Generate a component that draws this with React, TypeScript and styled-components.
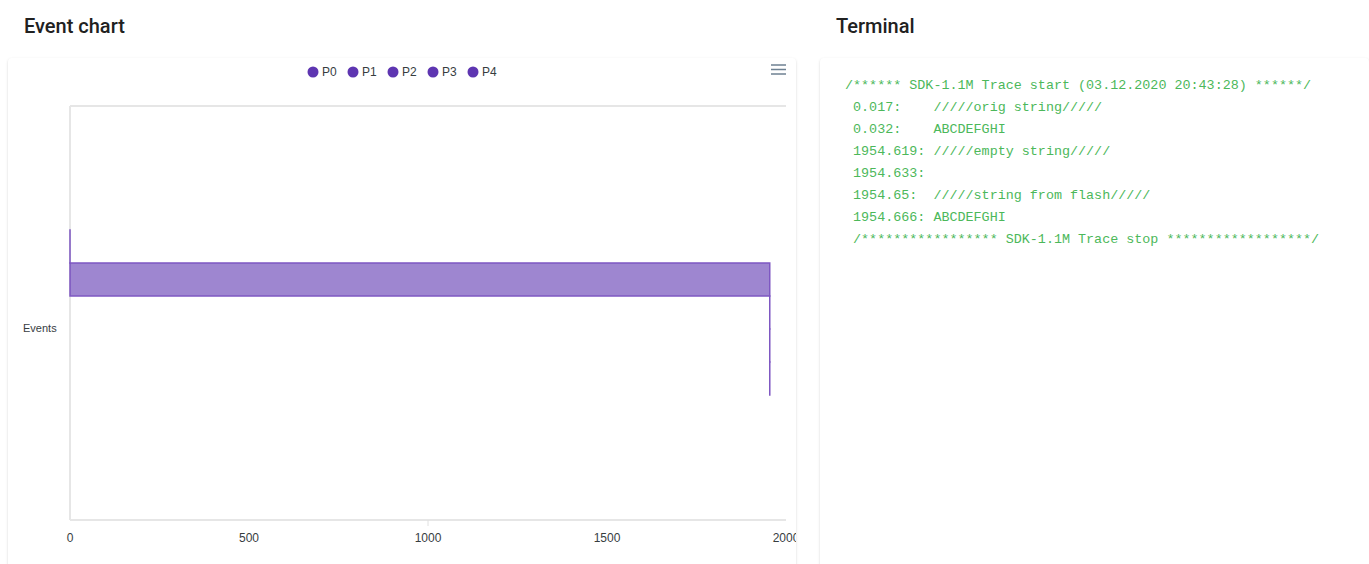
import React from "react";
import styled, { createGlobalStyle } from "styled-components";

const Global = createGlobalStyle`
  html, body { margin: 0; padding: 0; background: #fff; overflow: hidden; }
  body { font-family: Roboto, "Noto Sans", sans-serif; }
`;

const Page = styled.div`
  display: grid;
  grid-template-columns: 788px 1fr;
  column-gap: 24px;
  padding: 0 0 0 8px;
  height: 564px;
  overflow: hidden;
`;

const Column = styled.section`
  display: flex;
  flex-direction: column;
  min-width: 0;
`;

const Title = styled.h2`
  margin: 0;
  padding: 13px 16px 0;
  height: 45px;
  box-sizing: border-box;
  font-family: Roboto, sans-serif;
  font-weight: 500;
  font-size: 20px;
  line-height: 26px;
  color: #212121;
`;

const Card = styled.div`
  background: #fff;
  border-radius: 4px;
  box-shadow: 0 1px 3px rgba(0, 0, 0, 0.12), 0 1px 2px rgba(0, 0, 0, 0.06);
  height: 530px;
  margin-top: 13px;
  overflow: hidden;
`;

const TerminalBody = styled.pre`
  margin: 0;
  padding: 17px 25px;
  font-family: "Liberation Mono", "Courier New", monospace;
  font-size: 13.4px;
  line-height: 22px;
  color: #4cb85a;
  white-space: pre;
`;

const ChartSvg = styled.svg`
  display: block;
  font-family: "Liberation Sans", Arial, sans-serif;
`;

const lines = [
  "/****** SDK-1.1M Trace start (03.12.2020 20:43:28) ******/",
  " 0.017:    /////orig string/////",
  " 0.032:    ABCDEFGHI",
  " 1954.619: /////empty string/////",
  " 1954.633:",
  " 1954.65:  /////string from flash/////",
  " 1954.666: ABCDEFGHI",
  " /***************** SDK-1.1M Trace stop ******************/",
];

const PLOT_L = 62;
const PLOT_R = 778;
const PLOT_T = 48;
const PLOT_B = 462;
const xs = (v: number) => PLOT_L + (v / 2000) * (PLOT_R - PLOT_L);

const events = [
  { from: 0, to: 0.017 },
  { from: 0.032, to: 1954.619 },
  { from: 1954.619, to: 1954.633 },
  { from: 1954.633, to: 1954.65 },
  { from: 1954.65, to: 1954.666 },
];

const EventChart: React.FC = () => {
  const rowTop = 172;
  const rowH = 33;
  return (
    <ChartSvg width={788} height={530} viewBox="0 0 788 530">
      {["P0", "P1", "P2", "P3", "P4"].map((p, i) => (
        <g key={p}>
          <circle cx={305 + i * 40} cy={14} r={5.5} fill="#5e35b1" />
          <text x={314 + i * 40} y={18} fontSize={12} fill="#373d3f">
            {p}
          </text>
        </g>
      ))}
      <g stroke="#6e8192" strokeWidth={1.6}>
        <line x1={763} y1={7} x2={778} y2={7} />
        <line x1={763} y1={11.5} x2={778} y2={11.5} />
        <line x1={763} y1={16} x2={778} y2={16} />
      </g>
      <g stroke="#e6e6e6" strokeWidth={2} fill="none">
        <line x1={PLOT_L} y1={PLOT_T} x2={PLOT_R} y2={PLOT_T} />
        <line x1={PLOT_L} y1={PLOT_T} x2={PLOT_L} y2={PLOT_B} />
        <line x1={PLOT_L} y1={PLOT_B} x2={PLOT_R} y2={PLOT_B} />
      </g>
      <line x1={xs(1000)} y1={PLOT_B} x2={xs(1000)} y2={PLOT_B + 6} stroke="#e0e0e0" />
      {events.map((e, i) => {
        const x1 = xs(e.from);
        const x2 = xs(e.to);
        return (
          <rect
            key={i}
            x={x1}
            y={rowTop + i * rowH}
            width={Math.max(x2 - x1, 0.01)}
            height={rowH}
            fill="rgba(94,53,177,0.6)"
            stroke="#7e57c2"
            strokeWidth={1.5}
          />
        );
      })}
      <text x={15} y={274} fontSize={11} fill="#373d3f">
        Events
      </text>
      {[0, 500, 1000, 1500, 2000].map((v) => (
        <text key={v} x={xs(v)} y={484} fontSize={12} fill="#373d3f" textAnchor="middle">
          {v}
        </text>
      ))}
    </ChartSvg>
  );
};

export default function App() {
  return (
    <>
      <Global />
      <Page>
        <Column>
          <Title>Event chart</Title>
          <Card>
            <EventChart />
          </Card>
        </Column>
        <Column>
          <Title>Terminal</Title>
          <Card>
            <TerminalBody>{lines.join("\n")}</TerminalBody>
          </Card>
        </Column>
      </Page>
    </>
  );
}
